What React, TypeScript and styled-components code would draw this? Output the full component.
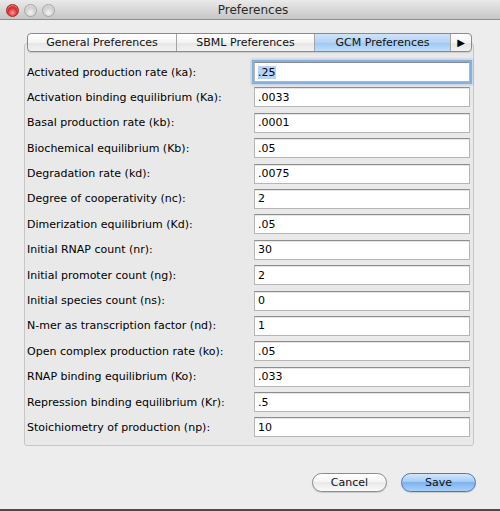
import React from "react";
import styled, { createGlobalStyle } from "styled-components";

const GlobalStyle = createGlobalStyle`
  html, body { margin: 0; padding: 0; background: #ededed; }
  body { font-family: "DejaVu Sans", "Open Sans", sans-serif; }
  * { box-sizing: border-box; }
`;

const Window = styled.div`
  width: 500px;
  height: 511px;
  display: flex;
  flex-direction: column;
  background: #ededed;
  overflow: hidden;
`;

const TitleBar = styled.div`
  height: 20px;
  flex: none;
  display: grid;
  grid-template-columns: 1fr auto 1fr;
  align-items: center;
  background: linear-gradient(#eaeaea, #d4d4d4 60%, #c6c6c6);
  border-bottom: 1px solid #8f8f8f;
  padding-left: 6px;
`;

const Lights = styled.div`
  display: flex;
  gap: 5px;
  align-items: center;
  margin-top: 1px;
`;

const Light = styled.span<{ $red?: boolean }>`
  width: 13px;
  height: 13px;
  border-radius: 50%;
  display: block;
  border: 1px solid ${(p) => (p.$red ? "#9b2a2a" : "#a5a5a5")};
  background: ${(p) =>
    p.$red
      ? "radial-gradient(circle at 50% 70%, #ff9a9a 0%, #e03232 45%, #b31c1c 100%)"
      : "radial-gradient(circle at 50% 70%, #f4f4f4 0%, #d2d2d2 50%, #bdbdbd 100%)"};
  box-shadow: inset 0 1px 1px rgba(255, 255, 255, 0.5);
`;

const Title = styled.div`
  font-size: 12px;
  color: #2a2a2a;
  text-align: center;
`;

const Body = styled.div`
  flex: 1;
  display: flex;
  flex-direction: column;
  padding: 13px 26px 0 24px;
`;

const TabBar = styled.div`
  position: relative;
  z-index: 1;
  margin: 0 2px -9px 3px;
  height: 19px;
  display: grid;
  grid-template-columns: 148px 138px 136px 1fr;
  border: 1px solid #8a8a8a;
  border-radius: 4px;
  overflow: hidden;
  background: linear-gradient(#ffffff, #f4f4f4 50%, #e6e6e6 51%, #f2f2f2);
  box-shadow: 0 1px 1px rgba(0, 0, 0, 0.12);
`;

const Tab = styled.div<{ $active?: boolean }>`
  display: flex;
  align-items: center;
  justify-content: center;
  font-size: 11px;
  color: #111;
  border-left: 1px solid #a4a4a4;
  &:first-child { border-left: none; }
  background: ${(p) =>
    p.$active
      ? "linear-gradient(#cfe3fa, #b3d3f6 50%, #9cc7f3 51%, #c2ddf9)"
      : "transparent"};
`;

const Arrow = styled(Tab)`
  font-size: 10px;
  color: #000;
`;

const Panel = styled.div`
  height: 403px;
  border: 1px solid #c6c6c6;
  border-radius: 3px;
  background: #e9e9e9;
  padding: 18px 3px 0 2px;
`;

const Form = styled.div`
  display: grid;
  grid-template-columns: 1fr 216px;
  row-gap: 5.4px;
  align-items: center;
`;

const Label = styled.label`
  font-size: 11px;
  color: #000;
`;

const Field = styled.div<{ $focus?: boolean }>`
  height: 20px;
  background: #fff;
  border: 1px solid #b6b6b6;
  border-top-color: #8d8d8d;
  display: flex;
  align-items: center;
  padding-left: 3px;
  font-size: 11px;
  color: #000;
  box-shadow: ${(p) =>
    p.$focus ? "0 0 0 2px #86aee0, 0 0 2px 3px rgba(120,160,220,0.4)" : "inset 0 1px 0 #e6e6e6"};
`;

const Selected = styled.span`
  background: #b5d3f8;
`;

const Footer = styled.div`
  display: flex;
  justify-content: flex-end;
  gap: 14px;
  margin: 27px -2px 0 0;
`;

const Button = styled.div<{ $primary?: boolean }>`
  width: 75px;
  height: 19px;
  border-radius: 10px;
  display: flex;
  align-items: center;
  justify-content: center;
  font-size: 11px;
  color: #111;
  border: 1px solid ${(p) => (p.$primary ? "#4f78b5" : "#8c8c8c")};
  background: ${(p) =>
    p.$primary
      ? "linear-gradient(#d3e6fb, #a6ccf5 45%, #7fb2ee 50%, #a9d0f8 100%)"
      : "linear-gradient(#ffffff, #f6f6f6 45%, #e9e9e9 50%, #fafafa 100%)"};
  box-shadow: 0 1px 1px rgba(0, 0, 0, 0.15);
`;

const BottomEdge = styled.div`
  height: 2px;
  flex: none;
  background: #4a4a4a;
`;

const rows: [string, string][] = [
  ["Activated production rate (ka):", ".25"],
  ["Activation binding equilibrium (Ka):", ".0033"],
  ["Basal production rate (kb):", ".0001"],
  ["Biochemical equilibrium (Kb):", ".05"],
  ["Degradation rate (kd):", ".0075"],
  ["Degree of cooperativity (nc):", "2"],
  ["Dimerization equilibrium (Kd):", ".05"],
  ["Initial RNAP count (nr):", "30"],
  ["Initial promoter count (ng):", "2"],
  ["Initial species count (ns):", "0"],
  ["N-mer as transcription factor (nd):", "1"],
  ["Open complex production rate (ko):", ".05"],
  ["RNAP binding equilibrium (Ko):", ".033"],
  ["Repression binding equilibrium (Kr):", ".5"],
  ["Stoichiometry of production (np):", "10"],
];

export default function App() {
  return (
    <Window>
      <GlobalStyle />
      <TitleBar>
        <Lights>
          <Light $red />
          <Light />
          <Light />
        </Lights>
        <Title>Preferences</Title>
        <div />
      </TitleBar>
      <Body>
        <TabBar>
          <Tab>General Preferences</Tab>
          <Tab>SBML Preferences</Tab>
          <Tab $active>GCM Preferences</Tab>
          <Arrow>▶</Arrow>
        </TabBar>
        <Panel>
          <Form>
            {rows.map(([label, value], i) => (
              <React.Fragment key={label}>
                <Label>{label}</Label>
                <Field $focus={i === 0}>
                  {i === 0 ? <Selected>{value}</Selected> : value}
                </Field>
              </React.Fragment>
            ))}
          </Form>
        </Panel>
        <Footer>
          <Button>Cancel</Button>
          <Button $primary>Save</Button>
        </Footer>
      </Body>
      <BottomEdge />
    </Window>
  );
}
